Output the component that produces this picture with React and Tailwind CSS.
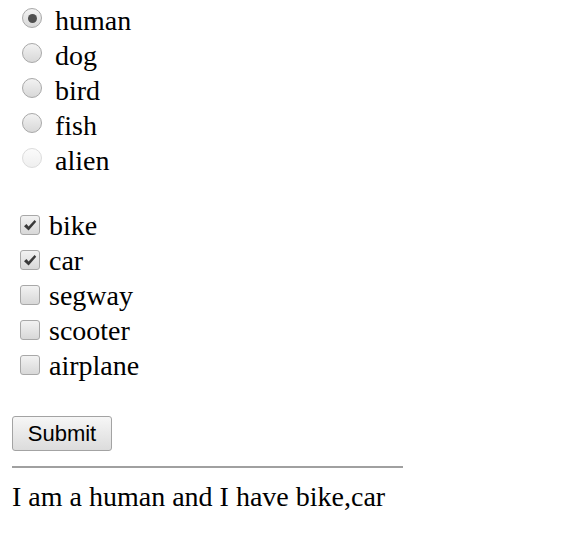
import React from 'react'

const animals = [
    { label: 'human', checked: true },
    { label: 'dog' },
    { label: 'bird' },
    { label: 'fish' },
    { label: 'alien', disabled: true },
]

const vehicles = [
    { label: 'bike', checked: true },
    { label: 'car', checked: true },
    { label: 'segway' },
    { label: 'scooter' },
    { label: 'airplane' },
]

function Radio({ checked, disabled }) {
    return (
        <span
            className={
                'mt-[5px] flex items-center justify-center w-[20px] h-[20px] rounded-full border shrink-0 ' +
                (disabled
                    ? 'border-[#dcdcdc] bg-gradient-to-b from-[#fbfbfb] to-[#efefef]'
                    : 'border-[#a8a8a8] bg-gradient-to-b from-[#f2f2f2] to-[#d8d8d8]')
            }
        >
            {checked && <span className="w-[9px] h-[9px] rounded-full bg-[#4f4f4f]" />}
        </span>
    )
}

function Checkbox({ checked }) {
    return (
        <span className="mt-[7px] flex items-center justify-center w-[20px] h-[20px] rounded-[3px] border border-[#a8a8a8] bg-gradient-to-b from-[#f2f2f2] to-[#d8d8d8] shrink-0">
            {checked && (
                <svg width="14" height="13" viewBox="0 0 14 13">
                    <path d="M1 7.2 L3.4 5 L5.6 7.4 L11.6 1 L13.2 2.8 L5.6 11.4 Z" fill="#3a3a3a" />
                </svg>
            )}
        </span>
    )
}

export default function App() {
    return (
        <div className="min-h-screen bg-white text-black text-[28px] leading-[35px] px-[12px] pt-[3px]" style={{ fontFamily: '"Liberation Serif", serif' }}>

            <div className="flex flex-col">
                {animals.map((a) => (
                    <label key={a.label} className="flex items-start h-[35px] pl-[10px]">
                        <Radio checked={a.checked} disabled={a.disabled} />
                        <span className="ml-[13px]">{a.label}</span>
                    </label>
                ))}
            </div>

            <div className="flex flex-col mt-[30px]">
                {vehicles.map((v) => (
                    <label key={v.label} className="flex items-start h-[35px] pl-[8px]">
                        <Checkbox checked={v.checked} />
                        <span className="ml-[9px]">{v.label}</span>
                    </label>
                ))}
            </div>

            <button className="block mt-[33px] h-[35px] w-[100px] border border-[#a3a3a3] rounded-[3px] bg-gradient-to-b from-[#f6f6f6] to-[#dcdcdc] text-[22px] leading-none" style={{ fontFamily: '"Liberation Sans", sans-serif' }}>
                Submit
            </button>

            <hr className="mt-[15px] w-[391px] border-0 h-[2px] bg-[#a0a0a0]" />

            <p className="mt-[11px]">I am a human and I have bike,car</p>
        </div>
    )
}
